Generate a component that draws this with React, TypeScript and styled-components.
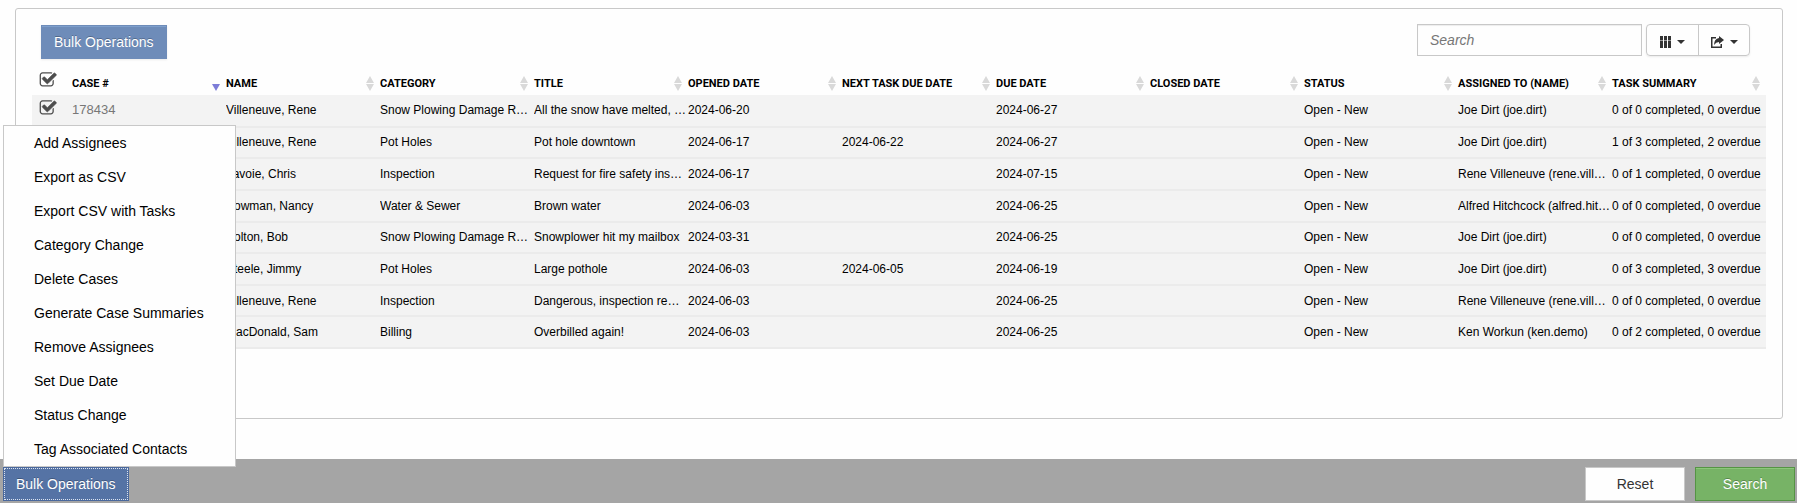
import React, { useState } from 'react';
import styled, { createGlobalStyle } from 'styled-components';

const GlobalStyle = createGlobalStyle`
  * { box-sizing: border-box; }
  body {
    margin: 0;
    background: #fefefe;
    color: #000;
    font-family: "Liberation Sans", Arial, sans-serif;
    font-size: 14px;
    line-height: 20px;
  }
  button, input { font: inherit; }
`;

const Page = styled.div`
  display: flex;
  flex-direction: column;
  min-height: 100vh;
`;

const Panel = styled.main`
  flex: 1;
  margin: 8px 14px 40px 15px;
  padding: 15px 16px;
  border: 1px solid #c8c8c8;
  border-radius: 3px;
`;

const Toolbar = styled.div`
  display: flex;
  align-items: flex-start;
  justify-content: space-between;
  padding: 0 16px 0 9px;
`;

const ToolbarLeft = styled.div`
  padding-top: 1px;
`;

const ToolbarRight = styled.div`
  display: flex;
  gap: 4px;
`;

const BulkButton = styled.button<{ $active?: boolean }>`
  display: block;
  height: 34px;
  padding: 0 12px;
  border: 1px solid ${p => (p.$active ? '#4a689c' : '#6e8cb9')};
  background: ${p => (p.$active ? '#5573a5' : '#6e8cb9')};
  color: #fff;
  text-shadow: 0 -1px 0 rgba(0, 0, 0, 0.25);
  white-space: nowrap;
  outline: ${p => (p.$active ? '1px dotted #dbe3f0' : 'none')};
  outline-offset: -2px;
  box-shadow: ${p => (p.$active ? 'none' : 'inset 0 1px 0 #7e9fcc, 0 1px 2px rgba(0, 0, 0, 0.08)')};
`;

const SearchBox = styled.input`
  width: 225px;
  height: 32px;
  padding: 0 12px;
  border: 1px solid #c8c8c8;
  background: #fefefe;
  box-shadow: inset 0 1px 1px rgba(0, 0, 0, 0.07);
  outline: none;
  &::placeholder { color: #777; font-style: italic; opacity: 1; }
`;

const ButtonGroup = styled.div`
  display: flex;
  height: 32px;
  border: 1px solid #c8c8c8;
  border-radius: 4px;
  box-shadow: 0 1px 2px rgba(0, 0, 0, 0.08);
`;

const IconButton = styled.button`
  display: flex;
  align-items: center;
  justify-content: center;
  gap: 6px;
  width: 51px;
  padding: 4px 0 0;
  border: 0;
  background: none;
  color: #333;
  & + & { border-left: 1px solid #c8c8c8; }
`;

const Caret = styled.span`
  border: 4px solid transparent;
  border-top-color: #333;
  border-bottom: 0;
`;

const CaseTable = styled.table`
  width: 100%;
  height: 290px;
  border-collapse: collapse;
  table-layout: fixed;
`;

const HeadCell = styled.th<{ $narrow?: boolean }>`
  width: ${p => (p.$narrow ? '40px' : 'auto')};
  height: 36px;
  padding: ${p => (p.$narrow ? '6px 0 0 7px' : '13px 0 0')};
  text-align: left;
  font-family: Roboto, "Liberation Sans", sans-serif;
  font-size: 11px;
  line-height: 16px;
  text-transform: uppercase;
  white-space: nowrap;
`;

const HeadContent = styled.div`
  display: flex;
  align-items: center;
  justify-content: space-between;
  padding-right: 6px;
`;

const Row = styled.tr`
  background: #f3f3f3;
  border-bottom: 2px solid #ebebeb;
`;

const Cell = styled.td<{ $check?: boolean }>`
  height: 31px;
  padding: ${p => (p.$check ? '0 0 4px 7px' : '0')};
  font-size: 12px;
  line-height: 16px;
  white-space: nowrap;
  overflow: hidden;
  text-overflow: ellipsis;
`;

const CaseLink = styled.a`
  color: #777;
  font-size: 13px;
  text-decoration: none;
`;

const Check = styled.label`
  position: relative;
  display: block;
  width: 18px;
  height: 18px;
  input {
    position: absolute;
    inset: 0;
    width: 100%;
    height: 100%;
    margin: 0;
    opacity: 0;
  }
  svg { display: block; }
`;

const Footer = styled.footer`
  display: flex;
  gap: 10px;
  padding: 8px 2px 2px 3px;
  background: #a5a5a5;
`;

const MenuAnchor = styled.div`
  position: relative;
  margin-right: auto;
`;

const Menu = styled.div`
  position: absolute;
  left: 0;
  bottom: 100%;
  width: 233px;
  border: 1px solid #c8c8c8;
  background: #fefefe;
`;

const MenuItem = styled.button`
  display: block;
  width: 100%;
  height: 34px;
  padding: 0 30px;
  border: 0;
  background: none;
  color: #000;
  text-align: left;
  white-space: nowrap;
`;

const ActionButton = styled.button<{ $primary?: boolean }>`
  width: 100px;
  height: 34px;
  border: 1px solid ${p => (p.$primary ? '#559444' : '#c8c8c8')};
  background: ${p => (p.$primary ? '#77b366' : '#fefefe')};
  color: ${p => (p.$primary ? '#fff' : '#333')};
  text-shadow: ${p => (p.$primary ? '0 -1px 0 rgba(0, 0, 0, 0.25)' : 'none')};
  box-shadow: ${p => (p.$primary ? 'inset 0 1px 0 #8cc87b' : 'none')};
`;

const columns = [
  'Case #', 'Name', 'Category', 'Title', 'Opened Date', 'Next Task Due Date',
  'Due Date', 'Closed Date', 'Status', 'Assigned To (Name)', 'Task Summary',
];

const cases = [
  ['178434', 'Villeneuve, Rene', 'Snow Plowing Damage Report', 'All the snow have melted, please help', '2024-06-20', '', '2024-06-27', '', 'Open - New', 'Joe Dirt (joe.dirt)', '0 of 0 completed, 0 overdue'],
  ['178433', 'Villeneuve, Rene', 'Pot Holes', 'Pot hole downtown', '2024-06-17', '2024-06-22', '2024-06-27', '', 'Open - New', 'Joe Dirt (joe.dirt)', '1 of 3 completed, 2 overdue'],
  ['178432', 'Lavoie, Chris', 'Inspection', 'Request for fire safety inspection', '2024-06-17', '', '2024-07-15', '', 'Open - New', 'Rene Villeneuve (rene.villeneuve)', '0 of 1 completed, 0 overdue'],
  ['178431', 'Bowman, Nancy', 'Water & Sewer', 'Brown water', '2024-06-03', '', '2024-06-25', '', 'Open - New', 'Alfred Hitchcock (alfred.hitchcock)', '0 of 0 completed, 0 overdue'],
  ['178430', 'Bolton, Bob', 'Snow Plowing Damage Report', 'Snowplower hit my mailbox', '2024-03-31', '', '2024-06-25', '', 'Open - New', 'Joe Dirt (joe.dirt)', '0 of 0 completed, 0 overdue'],
  ['178429', 'Steele, Jimmy', 'Pot Holes', 'Large pothole', '2024-06-03', '2024-06-05', '2024-06-19', '', 'Open - New', 'Joe Dirt (joe.dirt)', '0 of 3 completed, 3 overdue'],
  ['178428', 'Villeneuve, Rene', 'Inspection', 'Dangerous, inspection remains open', '2024-06-03', '', '2024-06-25', '', 'Open - New', 'Rene Villeneuve (rene.villeneuve)', '0 of 0 completed, 0 overdue'],
  ['178427', 'MacDonald, Sam', 'Billing', 'Overbilled again!', '2024-06-03', '', '2024-06-25', '', 'Open - New', 'Ken Workun (ken.demo)', '0 of 2 completed, 0 overdue'],
];

const operations = [
  'Add Assignees', 'Export as CSV', 'Export CSV with Tasks', 'Category Change', 'Delete Cases',
  'Generate Case Summaries', 'Remove Assignees', 'Set Due Date', 'Status Change', 'Tag Associated Contacts',
];

const boxPath =
  'M1472 930v318q0 119-84.5 203.5t-203.5 84.5h-832q-119 0-203.5-84.5t-84.5-203.5v-832q0-119 84.5-203.5t203.5-84.5h832q63 0 117 25 15 7 18 23 3 17-9 29l-49 49q-10 10-23 10-3 0-9-2-23-6-45-6h-832q-66 0-113 47t-47 113v832q0 66 47 113t113 47h832q66 0 113-47t47-113v-254q0-13 9-22l64-64q10-10 23-10 6 0 12 3 20 8 20 29z';
const tickPath =
  'M1703 441l-814 814q-24 24-57 24t-57-24l-430-430q-24-24-24-57t24-57l110-110q24-24 57-24t57 24l263 263 647-647q24-24 57-24t57 24l110 110q24 24 24 57t-24 57z';

function CheckBox({ label }: { label: string }) {
  const [checked, setChecked] = useState(true);
  return (
    <Check>
      <input type="checkbox" aria-label={label} checked={checked} onChange={e => setChecked(e.target.checked)} />
      <svg width="18" height="18" viewBox="0 0 1792 1792" fill="#4d4d4d" aria-hidden="true">
        <path d={boxPath} />
        {checked && <path d={tickPath} stroke="#4d4d4d" strokeWidth="60" />}
      </svg>
    </Check>
  );
}

function SortIcon({ active }: { active: boolean }) {
  return (
    <svg width="8" height="15" viewBox="0 0 8 15" aria-hidden="true">
      {active ? (
        <path d="M0 8h8l-4 7z" fill="#7d7dd8" />
      ) : (
        <path d="M0 7h8l-4-7zM0 8h8l-4 7z" fill="#d9d9d9" />
      )}
    </svg>
  );
}

export default function App() {
  const [open, setOpen] = useState(true);
  const [query, setQuery] = useState('');
  return (
    <Page>
      <GlobalStyle />
      <Panel>
        <Toolbar>
          <ToolbarLeft>
            <BulkButton type="button">Bulk Operations</BulkButton>
          </ToolbarLeft>
          <ToolbarRight>
            <SearchBox type="text" placeholder="Search" aria-label="Search cases" value={query} onChange={e => setQuery(e.target.value)} />
            <ButtonGroup>
              <IconButton type="button" aria-label="Columns">
                <svg width="11" height="12" viewBox="0 0 11 12" fill="#333" aria-hidden="true">
                  <path d="M0 0h3v4H0zM4 0h3v4H4zM8 0h3v4H8zM0 5h3v7H0zM4 5h3v7H4zM8 5h3v7H8z" />
                  <path d="M0 4h3v1H0zM4 4h3v1H4zM8 4h3v1H8z" opacity="0.5" />
                </svg>
                <Caret />
              </IconButton>
              <IconButton type="button" aria-label="Export">
                <svg width="13" height="12" viewBox="0 0 13 12" aria-hidden="true">
                  <path d="M5 1.75H.75v9.5h9.5V8" fill="none" stroke="#333" strokeWidth="1.5" />
                  <path d="M8 0l5 4-5 4V6Q5 6 3 9q0-6 5-7z" fill="#333" />
                </svg>
                <Caret />
              </IconButton>
            </ButtonGroup>
          </ToolbarRight>
        </Toolbar>
        <CaseTable>
          <thead>
            <tr>
              <HeadCell $narrow>
                <CheckBox label="Select all cases" />
              </HeadCell>
              {columns.map((name, i) => (
                <HeadCell key={name}>
                  <HeadContent>
                    {name}
                    <SortIcon active={i === 0} />
                  </HeadContent>
                </HeadCell>
              ))}
            </tr>
          </thead>
          <tbody>
            {cases.map(row => (
              <Row key={row[0]}>
                <Cell $check>
                  <CheckBox label={`Select case ${row[0]}`} />
                </Cell>
                {row.map((value, i) => (
                  <Cell key={i}>{i === 0 ? <CaseLink href="#">{value}</CaseLink> : value}</Cell>
                ))}
              </Row>
            ))}
          </tbody>
        </CaseTable>
      </Panel>
      <Footer>
        <MenuAnchor>
          {open && (
            <Menu>
              {operations.map(name => (
                <MenuItem type="button" key={name}>{name}</MenuItem>
              ))}
            </Menu>
          )}
          <BulkButton type="button" $active aria-expanded={open} onClick={() => setOpen(!open)}>
            Bulk Operations
          </BulkButton>
        </MenuAnchor>
        <ActionButton type="button">Reset</ActionButton>
        <ActionButton type="button" $primary>Search</ActionButton>
      </Footer>
    </Page>
  );
}
